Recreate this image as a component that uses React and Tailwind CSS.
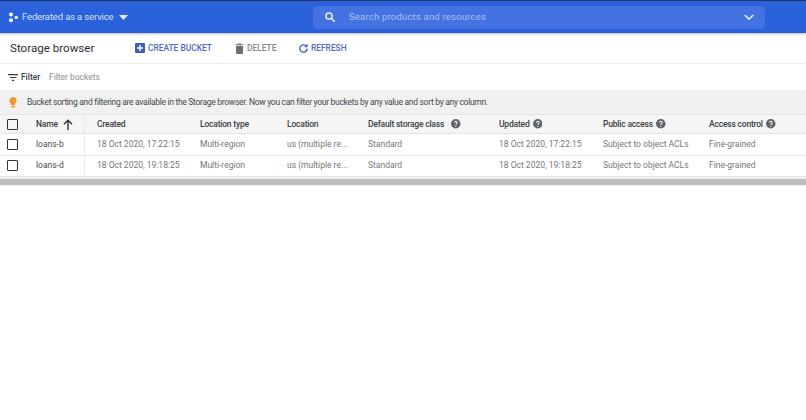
import React from "react";

const GRID = "grid grid-cols-[85px_103px_87px_81px_131px_104px_106px_1fr]";

function Check() {
  return <span className="block w-[11px] h-[11px] border-[1.5px] border-[#333] rounded-[1px]" />;
}

function Help() {
  return (
    <svg width="9.5" height="9.5" viewBox="0 0 24 24" className="shrink-0">
      <circle cx="12" cy="12" r="12" fill="#5f6368" />
      <path d="M8.5 9.5a3.5 3.5 0 1 1 5.6 2.8c-1.3 1-2.1 1.5-2.1 3" fill="none" stroke="#f5f5f5" strokeWidth="2.6" />
      <circle cx="12" cy="18.6" r="1.6" fill="#f5f5f5" />
    </svg>
  );
}

function Head({ children, help, gap = "gap-[3.5px]" }) {
  return (
    <div className={`flex items-center pl-3 ${gap} text-[8.5px] tracking-[-0.2px] font-medium text-[#3c4043] whitespace-nowrap`}>
      <span>{children}</span>
      {help && <Help />}
    </div>
  );
}

function Row({ name, date, height }) {
  const cell = "pl-3 flex items-center whitespace-nowrap";
  return (
    <div className={`${GRID} ${height} pb-[1px] border-b border-[#e4e4e4] text-[8.5px] text-[#74777a]`}>
      <div className="flex items-center border-r border-[#e8e8e8]">
        <span className="ml-[7px]"><Check /></span>
        <span className="ml-[18px] text-[#4a4d50]">{name}</span>
      </div>
      <div className={cell}>{date}</div>
      <div className={cell}>Multi-region</div>
      <div className={cell}>us (multiple re...</div>
      <div className={cell}>Standard</div>
      <div className={cell}>{date}</div>
      <div className={cell}>Subject to object ACLs</div>
      <div className={cell}>Fine-grained</div>
    </div>
  );
}

export default function App() {
  return (
    <div className="w-[806px] h-[420px] bg-white overflow-hidden font-['Roboto',sans-serif]">
      <header className="h-[33px] bg-[#2b62dc] border-t border-[#1f3566] shadow-[0_1px_2px_rgba(0,0,0,0.3)] flex items-center relative">
        <svg width="11" height="11" viewBox="0 0 11 11" className="ml-[8px]">
          <circle cx="3" cy="2.6" r="2" fill="#fff" />
          <circle cx="3" cy="8.2" r="2" fill="#fff" />
          <circle cx="8.3" cy="5.4" r="1.7" fill="#fff" />
        </svg>
        <span className="ml-[3px] mt-[1px] w-[91px] whitespace-nowrap text-[9.5px] tracking-[-0.15px] text-[#d5e0f8]">Federated as a service</span>
        <svg width="9" height="5" viewBox="0 0 9 5" className="ml-[6px]"><path d="M0 0h9L4.5 5z" fill="#e4ebfb" /></svg>
        <div className="ml-[185px] w-[452px] h-[23px] rounded-[4px] bg-[#4572e2] flex items-center">
          <svg width="12" height="12" viewBox="0 0 24 24" className="ml-[11px]" fill="none" stroke="#e6edfc" strokeWidth="3">
            <circle cx="10" cy="10" r="6.2" /><path d="M15 15l6.5 6.5" />
          </svg>
          <span className="ml-[13px] text-[9.5px] text-[#a9c0f3] tracking-[0.2px]">Search products and resources</span>
          <svg width="10" height="7" viewBox="0 0 10 7" className="ml-auto mr-[11px]" fill="none" stroke="#e9effc" strokeWidth="1.6"><path d="M0.8 1l4.2 4.2L9.2 1" /></svg>
        </div>
      </header>

      <div className="h-[31px] border-b border-[#ececec] flex items-center">
        <span className="ml-[10px] mt-[1px] w-[125px] whitespace-nowrap text-[11.6px] text-[#2c2e31]">Storage browser</span>
        <svg width="10" height="10" viewBox="0 0 10 10"><rect width="10" height="10" rx="1" fill="#3f5cc4" /><path d="M5 2v6M2 5h6" stroke="#fff" strokeWidth="1.5" /></svg>
        <span className="ml-[3px] w-[64px] whitespace-nowrap text-[8.4px] font-medium text-[#5168c6]">CREATE BUCKET</span>
        <svg width="9" height="11" viewBox="0 0 9 11" className="ml-[23px]"><path d="M0.5 1.3h8v1h-8zM1 3h7v7a1 1 0 0 1-1 1H2a1 1 0 0 1-1-1z M3 .5h3v1H3z" fill="#6d6f72" /></svg>
        <span className="ml-[3px] w-[30px] text-[8.4px] font-medium text-[#85878a]">DELETE</span>
        <svg width="11" height="11" viewBox="0 0 24 24" className="ml-[21px]" fill="none" stroke="#3f5cc4" strokeWidth="3">
          <path d="M20 12a8 8 0 1 1-2.6-5.9" /><path d="M21 1.5v7.5h-7.5z" fill="#3f5cc4" stroke="none" />
        </svg>
        <span className="ml-[2px] text-[8.4px] font-medium text-[#5168c6]">REFRESH</span>
      </div>

      <div className="h-[26px] flex items-center">
        <svg width="10" height="7" viewBox="0 0 10 7" className="ml-[8px]" stroke="#3c4043" strokeWidth="1.1"><path d="M0 .6h10M1.8 3.5h6.4M3.8 6.4h2.4" /></svg>
        <span className="ml-[3px] w-[19px] text-[8.4px] font-medium text-[#3c4043]">Filter</span>
        <span className="ml-[9px] text-[8.5px] text-[#8b8d90]">Filter buckets</span>
      </div>

      <div className="h-[25px] bg-[#f1f1f1] border-b border-[#e4e4e4] flex items-center">
        <svg width="8" height="11" viewBox="0 0 8 11" className="ml-[9px]">
          <path d="M4 0a3.6 3.6 0 0 1 2.2 6.5V8H1.8V6.5A3.6 3.6 0 0 1 4 0z" fill="#ef9a2d" />
          <rect x="2.2" y="8.8" width="3.6" height="1.8" rx=".7" fill="#ef9a2d" />
        </svg>
        <span className="ml-[10px] mt-[1px] whitespace-nowrap text-[8.5px] tracking-[-0.3px] text-[#45484b]">Bucket sorting and filtering are available in the Storage browser. Now you can filter your buckets by any value and sort by any column.</span>
      </div>

      <div className={`${GRID} h-[19px] bg-[#f5f5f5] border-b border-[#e4e4e4]`}>
        <div className="flex items-center border-r border-[#e8e8e8]">
          <span className="ml-[7px]"><Check /></span>
          <span className="ml-[18px] text-[8.5px] tracking-[-0.2px] font-medium text-[#3c4043]">Name</span>
          <svg width="10" height="11" viewBox="0 0 10 11" className="ml-[5px]" fill="none" stroke="#333" strokeWidth="1.4"><path d="M5 11V1.5M1 5.2L5 1.2l4 4" /></svg>
        </div>
        <Head>Created</Head>
        <Head>Location type</Head>
        <Head>Location</Head>
        <Head help gap="gap-[7px]">Default storage class</Head>
        <Head help>Updated</Head>
        <Head help>Public access</Head>
        <Head help>Access control</Head>
      </div>

      <Row name="loans-b" date="18 Oct 2020, 17:22:15" height="h-[22px]" />
      <Row name="loans-d" date="18 Oct 2020, 19:18:25" height="h-[21px]" />
      <div className="h-[2px] bg-[#f1f1f1]" />
      <div className="h-[6px] bg-[#bdbdbd]" />
      <div className="h-[1px] bg-[#ededed]" />
    </div>
  );
}
